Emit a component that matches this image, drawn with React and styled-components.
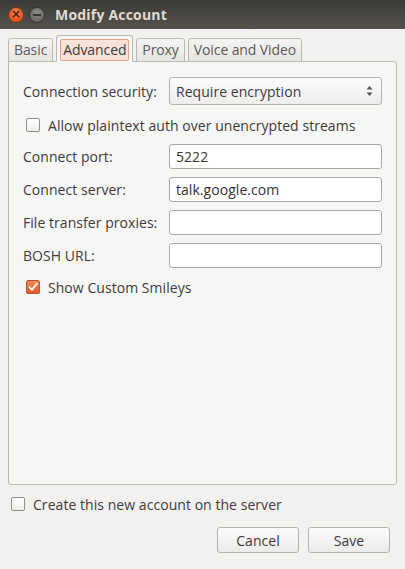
import styled, { createGlobalStyle } from "styled-components";

const GlobalStyle = createGlobalStyle`
  html, body {
    margin: 0;
    padding: 0;
    background: #f2f1f0;
  }
  * {
    box-sizing: border-box;
  }
`;

const tabs = ["Basic", "Advanced", "Proxy", "Voice and Video"];

const fields = [
  { label: "Connect port:", value: "5222" },
  { label: "Connect server:", value: "talk.google.com" },
  { label: "File transfer proxies:", value: "" },
  { label: "BOSH URL:", value: "" },
];

const CheckMark = () => (
  <svg width="10" height="10" viewBox="0 0 10 10">
    <path
      d="M1.5 5.2 L4 7.8 L8.8 1.8"
      fill="none"
      stroke="#fff"
      strokeWidth="1.8"
      strokeLinecap="round"
      strokeLinejoin="round"
    />
  </svg>
);

const SpinArrows = () => (
  <svg width="7" height="12" viewBox="0 0 7 12">
    <path d="M3.5 1 L6.5 4.5 L0.5 4.5 Z" fill="#555" />
    <path d="M3.5 11 L6.5 7.5 L0.5 7.5 Z" fill="#555" />
  </svg>
);

const Check = ({ checked, children }) => (
  <CheckRow>
    <Box checked={checked}>{checked && <CheckMark />}</Box>
    <span>{children}</span>
  </CheckRow>
);

const App = () => {
  return (
    <Window>
      <GlobalStyle />
      <TitleBar>
        <CloseButton>×</CloseButton>
        <MinButton />
        <Title>Modify Account</Title>
      </TitleBar>

      <Body>
        <TabRow>
          {tabs.map((t) => (
            <Tab key={t} active={t === "Advanced"}>
              <TabLabel active={t === "Advanced"}>{t}</TabLabel>
            </Tab>
          ))}
        </TabRow>

        <Panel>
          <FormRow>
            <Label>Connection security:</Label>
            <Select>
              <span>Require encryption</span>
              <SpinArrows />
            </Select>
          </FormRow>

          <Indented $top={10}>
            <Check>Allow plaintext auth over unencrypted streams</Check>
          </Indented>

          <Fields>
            {fields.map(({ label, value }) => (
              <FormRow key={label}>
                <Label>{label}</Label>
                <Entry>{value}</Entry>
              </FormRow>
            ))}
          </Fields>

          <Indented $top={9}>
            <Check checked>Show Custom Smileys</Check>
          </Indented>
        </Panel>

        <BottomCheck>
          <Check>Create this new account on the server</Check>
        </BottomCheck>

        <Buttons>
          <Button>Cancel</Button>
          <Button>Save</Button>
        </Buttons>
      </Body>
    </Window>
  );
};

export default App;

const Window = styled.div`
  width: 405px;
  height: 569px;
  display: flex;
  flex-direction: column;
  background: #f2f1f0;
  font-family: "Open Sans", "Noto Sans", sans-serif;
  font-size: 14px;
  letter-spacing: 0.05px;
  color: #3c3c3c;
  overflow: hidden;
`;

const TitleBar = styled.div`
  height: 29px;
  flex-shrink: 0;
  display: flex;
  align-items: center;
  padding-left: 8px;
  background: linear-gradient(to bottom, #3b3a36, #55534c);
`;

const CloseButton = styled.div`
  width: 16px;
  height: 16px;
  border-radius: 50%;
  background: radial-gradient(circle at 50% 35%, #f58a5a, #e0501c 70%);
  border: 1px solid #7a3a22;
  color: #4a1b0a;
  font-family: "DejaVu Sans", sans-serif;
  font-size: 12px;
  font-weight: bold;
  line-height: 13px;
  text-align: center;
`;

const MinButton = styled.div`
  position: relative;
  width: 16px;
  height: 16px;
  margin-left: 5px;
  border-radius: 50%;
  background: radial-gradient(circle at 50% 35%, #8e8c86, #6b6964 70%);
  border: 1px solid #34332f;

  &::after {
    content: "";
    position: absolute;
    left: 3px;
    right: 3px;
    top: 6px;
    height: 2px;
    background: #3a3935;
  }
`;

const Title = styled.div`
  margin-left: 10px;
  color: #dfdbd2;
  font-weight: bold;
  font-size: 14px;
  letter-spacing: 0.2px;
`;

const Body = styled.div`
  flex: 1;
  display: flex;
  flex-direction: column;
  padding: 6px 8px 0 8px;
`;

const TabRow = styled.div`
  display: flex;
  align-items: flex-end;
  gap: 3px;
  height: 27px;
  position: relative;
  z-index: 1;
  margin-bottom: -1px;
`;

const Tab = styled.div`
  height: ${(p) => (p.active ? "27px" : "24px")};
  padding: ${(p) => (p.active ? "3px 3px 0" : "0 5px")};
  display: flex;
  align-items: ${(p) => (p.active ? "flex-start" : "center")};
  border: 1px solid #b9b8b4;
  border-bottom: ${(p) => (p.active ? "1px solid #f6f6f5" : "1px solid #b9b8b4")};
  border-radius: 3px 3px 0 0;
  background: ${(p) =>
    p.active ? "#f6f6f5" : "linear-gradient(to bottom, #f4f4f3, #e6e5e3)"};
  color: ${(p) => (p.active ? "#3c3c3c" : "#5a5a5a")};
  letter-spacing: -0.1px;
`;

const TabLabel = styled.span`
  display: block;
  line-height: 18px;
  padding: ${(p) => (p.active ? "1px 2px" : "0")};
  background: ${(p) => (p.active ? "#fbe2d9" : "transparent")};
  border: ${(p) => (p.active ? "1px solid #e9a28a" : "none")};
  border-radius: 2px;
`;

const Panel = styled.div`
  height: 424px;
  flex-shrink: 0;
  display: flex;
  flex-direction: column;
  padding: 15px 14px 0 14px;
  background: #f6f6f5;
  border: 1px solid #b9b8b4;
  border-radius: 0 3px 3px 3px;
`;

const FormRow = styled.div`
  display: flex;
  align-items: center;
`;

const Label = styled.div`
  width: 146px;
  flex-shrink: 0;
  white-space: nowrap;
`;

const Select = styled.div`
  width: 214px;
  height: 28px;
  display: flex;
  align-items: center;
  justify-content: space-between;
  padding: 0 8px 0 6px;
  border: 1px solid #b3b2ae;
  border-radius: 3px;
  background: linear-gradient(to bottom, #fbfbfb, #ededec);
`;

const Fields = styled.div`
  display: flex;
  flex-direction: column;
  gap: 8px;
  margin-top: 9px;
`;

const Entry = styled.div`
  width: 214px;
  height: 25px;
  display: flex;
  align-items: center;
  padding: 0 6px;
  background: #fff;
  border: 1px solid #a9a8a4;
  border-radius: 3px;
  color: #333;
`;

const Indented = styled.div`
  margin-top: ${(p) => p.$top}px;
  padding-left: 3px;
`;

const CheckRow = styled.div`
  height: 20px;
  display: flex;
  align-items: center;
  gap: 8px;
  white-space: nowrap;
`;

const Box = styled.div`
  width: 14px;
  height: 14px;
  display: flex;
  align-items: center;
  justify-content: center;
  border-radius: 2px;
  border: 1px solid ${(p) => (p.checked ? "#b9532c" : "#8f8e8a")};
  background: ${(p) =>
    p.checked
      ? "linear-gradient(to bottom, #ef8a5b, #dc5a2a)"
      : "linear-gradient(to bottom, #ffffff, #eeeeec)"};
`;

const BottomCheck = styled.div`
  margin-top: 9px;
  padding-left: 3px;
`;

const Buttons = styled.div`
  display: flex;
  justify-content: flex-end;
  gap: 9px;
  margin-top: 13px;
  padding-right: 7px;
`;

const Button = styled.div`
  width: 82px;
  height: 26px;
  display: flex;
  align-items: center;
  justify-content: center;
  border: 1px solid #b3b2ae;
  border-radius: 3px;
  background: linear-gradient(to bottom, #fbfbfb, #ebebea);
  color: #3c3c3c;
`;
